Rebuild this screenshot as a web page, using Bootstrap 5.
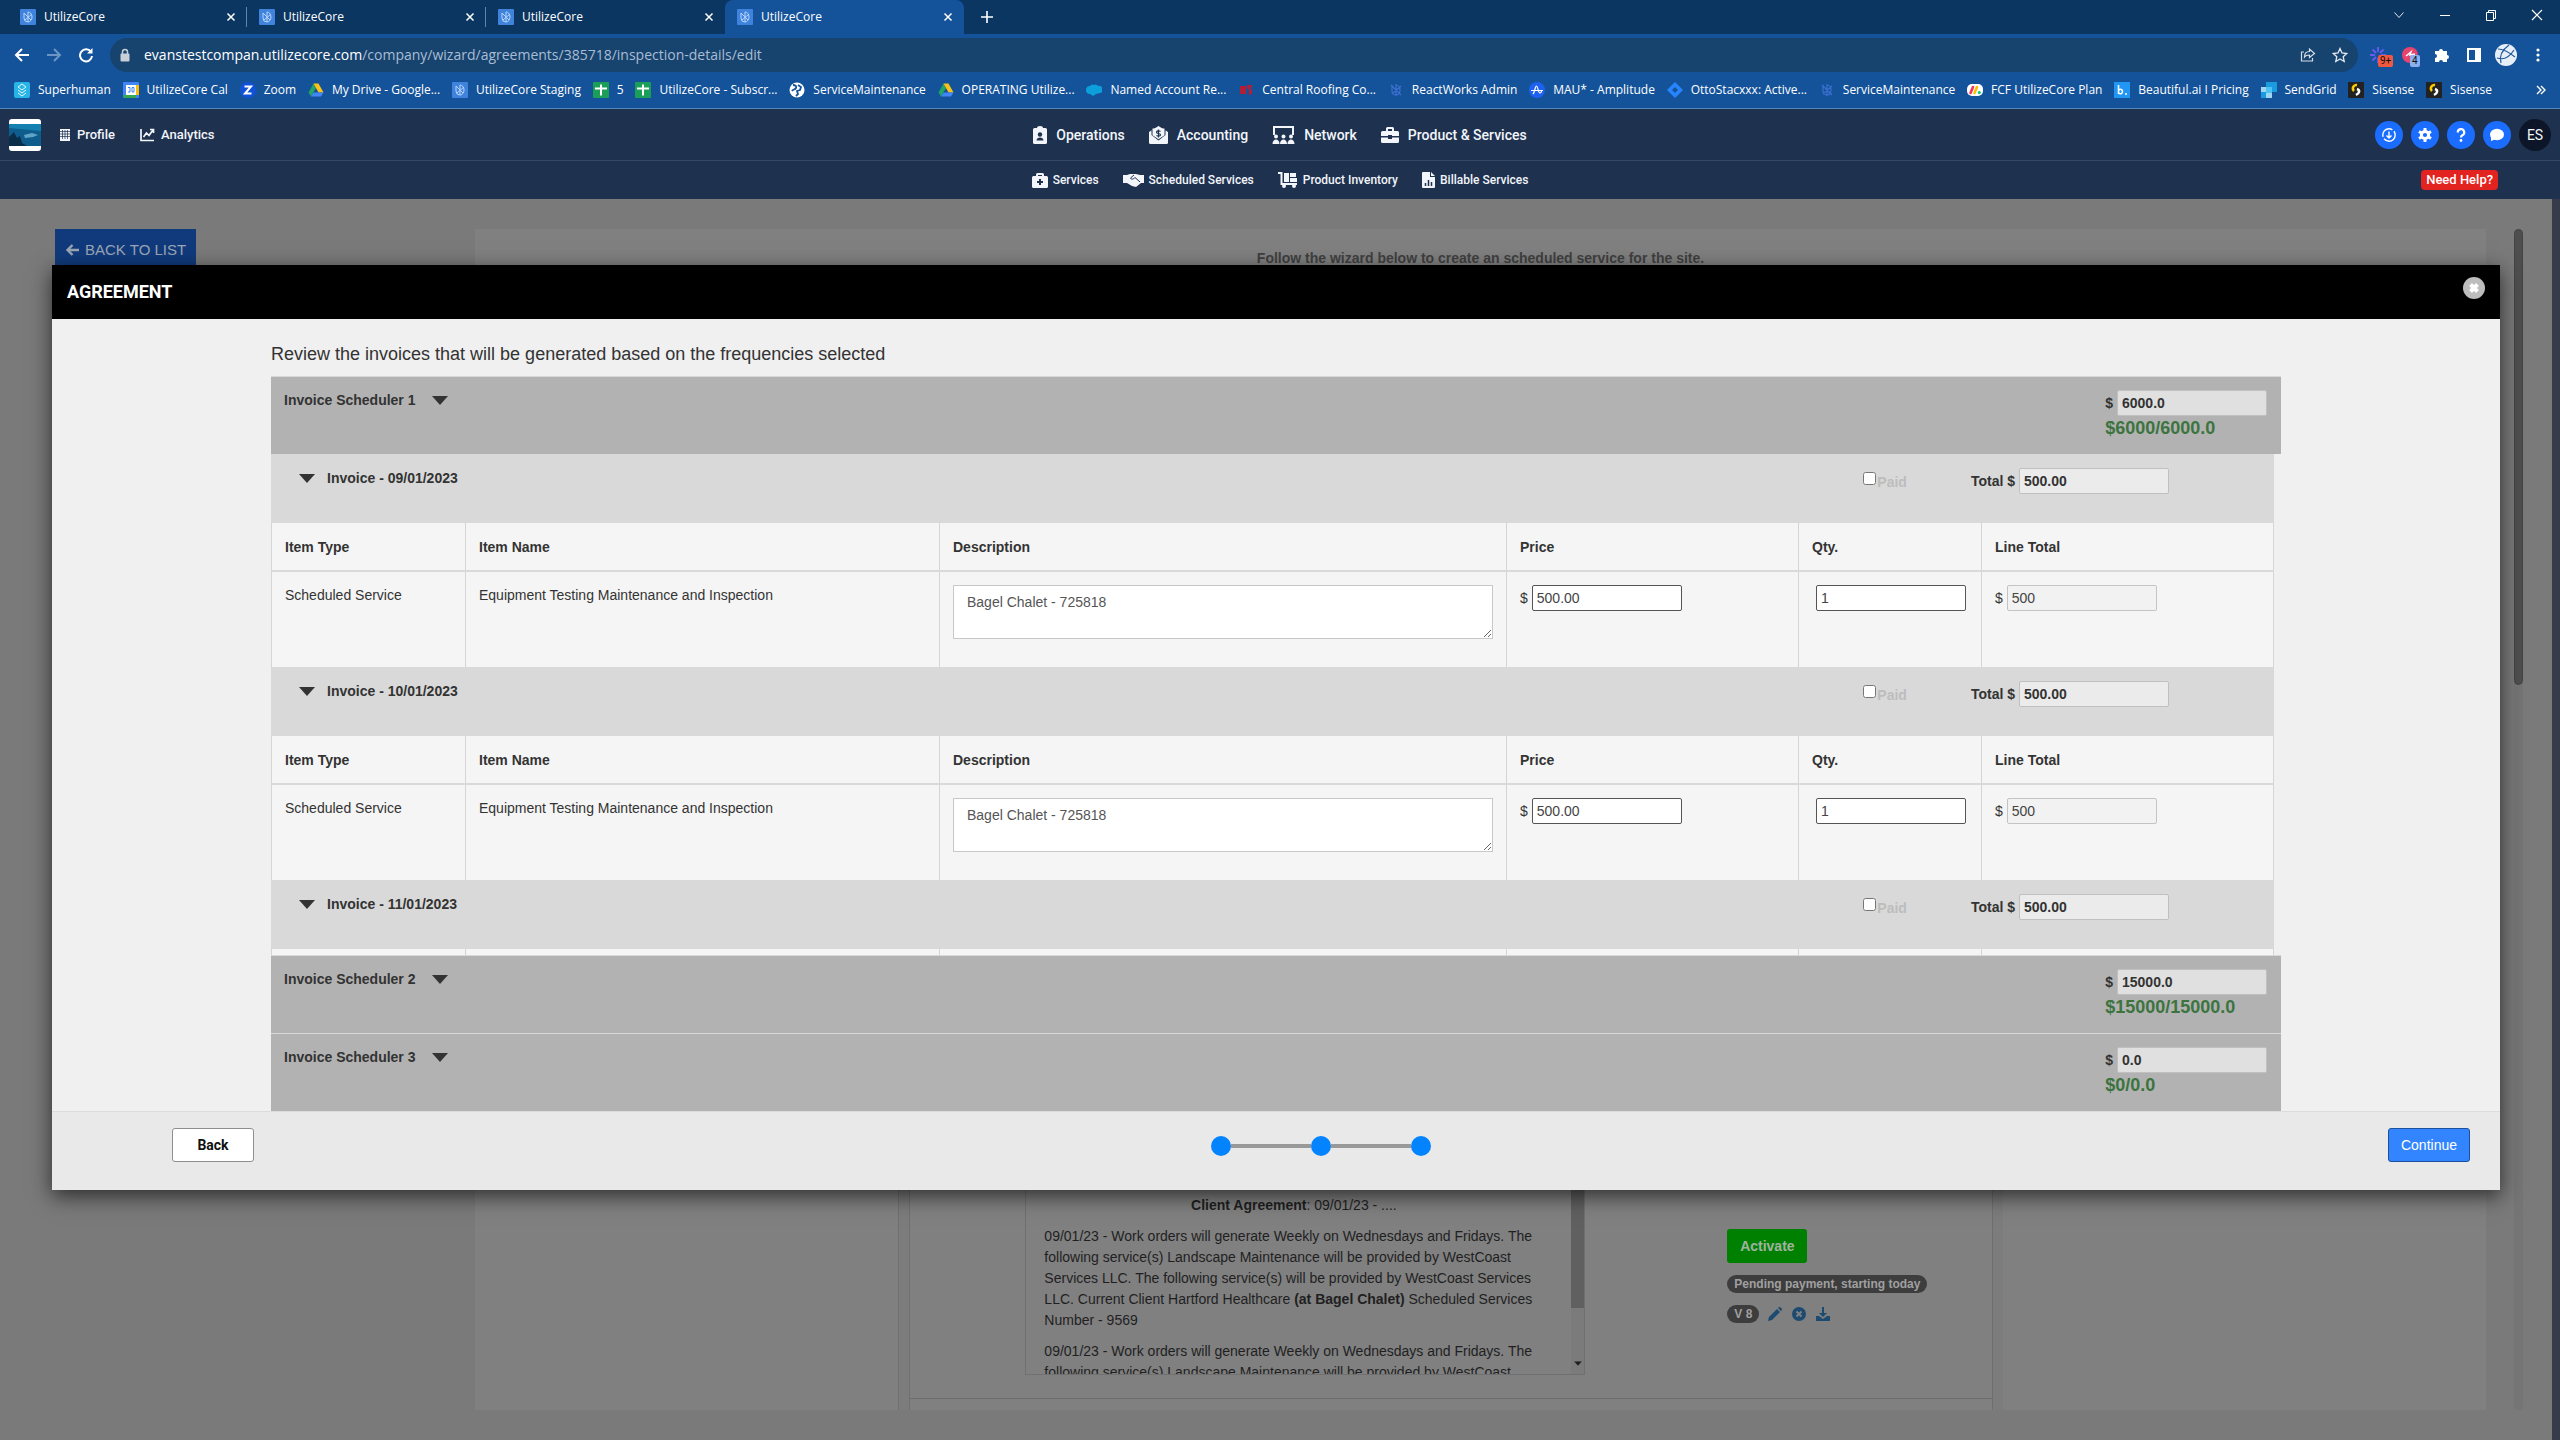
<!DOCTYPE html>
<html lang="en">
<head>
<meta charset="utf-8">
<meta name="viewport" content="width=device-width, initial-scale=1">
<title>UtilizeCore</title>
<link href="https://cdn.jsdelivr.net/npm/bootstrap@5.3.0/dist/css/bootstrap.min.css" rel="stylesheet">
<style>
  body { font: 14px/20px "Liberation Sans", Arial, sans-serif; color: #333; background: #363c49; min-height: 100vh; }
  a { text-decoration: none; }
  svg { flex: none; display: block; }
  .i16 { width: 16px; height: 16px; }
  .i20 { width: 20px; height: 20px; }
  /* browser frame */
  .chrome { background: #14539a; color: #fff; font: 12px/18px "Open Sans", "Noto Sans", sans-serif; border-bottom: 1px solid #4f86b8; }
  .chrome a { color: #fff; }
  .tabstrip { background: #0b3661; height: 34px; padding-left: 8px; padding-right: 15px; }
  .btab { width: 239px; padding: 0 10px 0 12px; height: 34px; }
  .btab + .btab:not(.active) { box-shadow: inset 0 0 0 0 transparent; }
  .btab.split { background: linear-gradient(#5d86ae, #5d86ae) right center / 1px 20px no-repeat; }
  .btab.active { background: #14539a; border-radius: 8px 8px 0 0; }
  .plainbtn { background: none; border: 0; padding: 0; color: inherit; display: block; }
  .winbtns { gap: 30px; }
  .toolbar { height: 38px; padding: 0 14px; }
  .navbtns { gap: 16px; width: 96px; }
  .omni { background: #17436f; border-radius: 17px; height: 34px; padding: 0 10px 0 8px; font-size: 14px; }
  .omni input { background: none; border: 0; color: #a9bdd3; outline: 0; padding: 0; }
  .omni .host { color: #fff; }
  .exts { gap: 16px; padding-left: 12px; }
  .ext { width: 16px; height: 16px; position: relative; }
  .ext-n { position: absolute; left: 8px; top: 8px; font: 10px/12px Roboto, sans-serif; color: #111; padding: 0 2px; border-radius: 2px; }
  .bookmarks { height: 36px; padding: 0 14px; font-size: 12px; }
  .bookmarks a { gap: 8px; white-space: nowrap; }
  /* app navigation */
  .appnav { background: #1e314f; font-family: Roboto, sans-serif; font-weight: 500; color: #f2f5fa; }
  .appnav a { color: #f2f5fa; }
  .nav-top { height: 52px; padding: 0 9px; border-bottom: 1px solid #35486a; }
  .nav-sub { height: 38px; font-size: 12px; }
  .side { flex: 1 1 0; }
  .mainmenu { gap: 24px; font-size: 14px; }
  .mainmenu a { gap: 9px; }
  .submenu { gap: 24px; }
  .submenu a { gap: 5px; }
  .logo { width: 32px; height: 32px; }
  .small-links { font-size: 13px; padding-left: 18px; gap: 25px; }
  .small-links a { gap: 6px; }
  .round { width: 28px; height: 28px; border: 0; border-radius: 50%; background: #1a6dff; color: #fff; padding: 0; }
  .avatar { width: 32px; height: 32px; border-radius: 50%; background: #0c1628; font-weight: 400; }
  .help-btn { background: #e3231f; color: #fff; border: 0; border-radius: 4px; font-size: 13px; line-height: 20px; padding: 0 5px; margin-right: 62px; font-weight: 500; }
  /* dimmed page */
  .page { background: #7a7a7a; margin-right: 8px; padding: 30px 29px 30px 55px; min-height: 1241px; }
  .leftcol { width: 420px; }
  .backlist { background: #113a7c; color: #9aa5b5; border: 0; border-radius: 0; height: 42px; font-size: 15px; padding: 0 10px; gap: 6px; }
  .panel { background: #808080; color: #1f1f1f; }
  .wizard-note { color: #404040; font-weight: 700; padding-top: 19px; }
  .cols { gap: 10px; }
  .pcol { border: 0 solid #6f6f6f; border-right-width: 1px; box-shadow: 10px 0 0 #7c7c7c; }
  .pmid { border-left-width: 1px; }
  .agree { padding: 0 0 23px 115px; border-bottom: 1px solid #6c6c6c; margin-bottom: 11px; }
  .agree-box { width: 560px; height: 194px; border: 1px solid #707070; line-height: 21px; overflow: hidden; }
  .agree-text { padding: 13px 28px 0 18px; }
  .agree-text p { margin: 0 0 10px; }
  .abar { width: 18px; background: #7b7b7b; }
  .abar .thumb { width: 13px; height: 126px; background: #606060; }
  .acts { padding: 48px 0 0 142px; }
  .activate { background: #008000; color: #a0b3a0; border: 0; border-radius: 3px; height: 34px; width: 80px; font-weight: 700; }
  .pill { background: #3d3d3d; color: #a0a0a0; font: 700 12px/18px "Liberation Sans", Arial, sans-serif; border-radius: 9px; padding: 0 7px; }
  .iconlinks { gap: 8px; color: #1d4a70; }
  .iconlinks a { color: #1d4a70; }
  .track { width: 9px; margin-left: 28px; background: #757575; border-radius: 5px; }
  .track .thumb { height: 456px; background: #4e4e4e; border: 1px solid #444; border-radius: 5px; }
  /* dialog */
  .dlg { position: absolute; left: 52px; right: 60px; top: 265px; background: #f0f0f0; box-shadow: 0 6px 20px rgba(0,0,0,.65); }
  .dlg-head { background: #000; color: #fff; height: 54px; padding: 0 15px; font: 700 18px/24px Roboto, sans-serif; }
  .dlg-head h1 { font: inherit; margin: 0; }
  .dlg-body { padding: 23px 219px 0; }
  .intro { font-size: 18px; line-height: 24px; margin: 0 0 10px; }
  .sched { background: #b2b2b2; border-top: 1px solid #d8d8d8; height: 78px; padding: 13px 14px 0 13px; font-weight: 700; }
  .sched .plainbtn, .inv .plainbtn { font-weight: 700; }
  .caret { width: 16px; height: 9px; }
  .sum { color: #3c7440; font-size: 18px; line-height: 24px; }
  .cell-in { width: 150px; height: 26px; border: 1px solid #555; border-radius: 2px; background: #fff; padding: 0 4px; color: #444; font-size: 14px; line-height: 20px; }
  .cell-in.off { background: #f2f2f2; border-color: #c4c4c4; }
  .cell-in.bold { background: #ebebeb; border-color: #c0c0c0; font-weight: 700; color: #333; }
  .sched .cell-in.bold { background: #e0e0e0; }
  .invs { margin-right: 7px; }
  .inv { background: #d9d9d9; height: 69px; padding: 14px 105px 0 28px; font-weight: 700; }
  .paid { color: #bdbdbd; margin-right: 64px; padding-top: 4px; }
  .paid input { width: 13px; height: 13px; margin: 0 1px 0 0; }
  .items { table-layout: fixed; width: 100%; background: #f5f5f5; border-collapse: collapse; }
  .items th, .items td { border: 1px solid #d5d5d5; border-top: 0; padding: 0 13px; }
  .items th { height: 48px; border-bottom: 2px solid #d9d9d9; }
  .items td { height: 96px; border-bottom: 0; padding-top: 13px; vertical-align: top; }
  .items .stub { height: 6px; padding: 0; }
  .c1 { width: 194px; } .c2 { width: 474px; } .c3 { width: 567px; } .c4 { width: 292px; } .c5 { width: 183px; }
  .desc { display: block; width: 100%; height: 54px; border: 1px solid #c8c8c8; border-radius: 0; background: #fff; color: #555; padding: 6px 13px; line-height: 20px; resize: vertical; }
  .dlg-foot { background: #e9e9e9; border-top: 1px solid #dcdcdc; height: 79px; padding: 16px 30px 0 120px; }
  .btn-back { width: 82px; height: 34px; border: 1px solid #8f8f8f; border-radius: 3px; background: #fff; color: #111; font: 700 14px/20px Roboto, sans-serif; }
  .btn-go { width: 82px; height: 34px; border: 1px solid #1c4f9c; border-radius: 3px; background: #3385ff; color: #fff; }
  .steps .dot { width: 20px; height: 20px; border-radius: 50%; background: #0483ff; }
  .steps .bar { width: 80px; height: 4px; background: #999; }
</style>
<script src="https://cdn.jsdelivr.net/npm/bootstrap@5.3.0/dist/js/bootstrap.bundle.min.js"></script>
</head>
<body>
<svg width="0" height="0" class="position-absolute" aria-hidden="true">
  <symbol id="uc" viewBox="0 0 16 16"><rect width="16" height="16" rx="1" fill="#3f83dd"/><path d="M4 4v5a4 4 0 0 0 4 4M8 3v10M8 3a4 5 0 0 1 0 10M4 4l7 7M12 5l-7 6" fill="none" stroke="#b9d6ff" stroke-width="1"/></symbol>
  <symbol id="ucd" viewBox="0 0 16 16"><path d="M4 3v6a4 4 0 0 0 4 4M8 2v12M8 3a4 5 0 0 1 0 10M3 3l10 10M13 4l-9 8" fill="none" stroke="#3c6fd0" stroke-width="1.2"/></symbol>
  <symbol id="x" viewBox="0 0 12 12"><path d="M2.5 2.5l7 7M9.500 2.500l-7 7" stroke="currentColor" stroke-width="1.500"/></symbol>
  <symbol id="drive" viewBox="0 0 16 16"><path d="M5.500 1.500L.5 10.500 3 14.500 8 6z" fill="#22a565"/><path d="M5.500 1.500h5l5 9h-5z" fill="#fbc116"/><path d="M5.500 10.500h10l-2.500 4H3z" fill="#4285f4"/></symbol>
  <symbol id="sheet" viewBox="0 0 16 16"><rect width="16" height="16" rx="1" fill="#1b9e58"/><path d="M8 2.500v11M2 6.500h12" stroke="#fff" stroke-width="2"/></symbol>
  <symbol id="sis" viewBox="0 0 16 16"><rect width="16" height="16" fill="#222"/><path d="M9 3a3.500 3.500 0 0 0-3 6" fill="none" stroke="#ffcb05" stroke-width="2.500"/><path d="M9 7c3 1 3 4-1 6" fill="none" stroke="#fff" stroke-width="2.500"/></symbol>
  <symbol id="tri" viewBox="0 0 16 9"><path d="M0 0h16L8 9z" fill="currentColor"/></symbol>
</svg>

<header class="chrome">
  <div class="tabstrip d-flex align-items-center">
    <div class="btab split d-flex align-items-center gap-2"><svg class="i16"><use href="#uc"/></svg><span class="flex-grow-1">UtilizeCore</span><button class="plainbtn" aria-label="Close tab"><svg width="12" height="12"><use href="#x"/></svg></button></div>
    <div class="btab split d-flex align-items-center gap-2"><svg class="i16"><use href="#uc"/></svg><span class="flex-grow-1">UtilizeCore</span><button class="plainbtn" aria-label="Close tab"><svg width="12" height="12"><use href="#x"/></svg></button></div>
    <div class="btab d-flex align-items-center gap-2"><svg class="i16"><use href="#uc"/></svg><span class="flex-grow-1">UtilizeCore</span><button class="plainbtn" aria-label="Close tab"><svg width="12" height="12"><use href="#x"/></svg></button></div>
    <div class="btab active d-flex align-items-center gap-2"><svg class="i16"><use href="#uc"/></svg><span class="flex-grow-1">UtilizeCore</span><button class="plainbtn" aria-label="Close tab"><svg width="12" height="12"><use href="#x"/></svg></button></div>
    <button class="plainbtn ms-3" aria-label="New tab"><svg width="14" height="14" viewBox="0 0 14 14"><path d="M7 1v12M1 7h12" stroke="#fff" stroke-width="1.600"/></svg></button>
    <div class="winbtns d-flex ms-auto pb-1">
      <button class="plainbtn" aria-label="Search tabs"><svg class="i16" viewBox="0 0 16 16"><path d="M3.500 5.500L8 10.500l4.500-5" fill="none" stroke="#dfe8f2"/></svg></button>
      <button class="plainbtn" aria-label="Minimize"><svg class="i16" viewBox="0 0 16 16"><path d="M3 8.500h10" stroke="#fff"/></svg></button>
      <button class="plainbtn" aria-label="Restore"><svg class="i16" viewBox="0 0 16 16"><path d="M3.500 5.500h7v8h-7zM5.500 5.500v-2h7v8h-2" fill="none" stroke="#fff"/></svg></button>
      <button class="plainbtn" aria-label="Close"><svg class="i16" viewBox="0 0 16 16"><path d="M3 3l10 10M13 3L3 13" stroke="#fff" stroke-width="1.200"/></svg></button>
    </div>
  </div>
  <div class="toolbar d-flex align-items-center pt-1">
    <div class="navbtns d-flex">
      <button class="plainbtn" aria-label="Back"><svg class="i16" viewBox="0 0 16 16"><path d="M15 8H2M8 2L2 8l6 6" fill="none" stroke="#fff" stroke-width="2"/></svg></button>
      <button class="plainbtn" aria-label="Forward"><svg class="i16" viewBox="0 0 16 16"><path d="M1 8h13M8 2l6 6-6 6" fill="none" stroke="#6c95c4" stroke-width="2"/></svg></button>
      <button class="plainbtn" aria-label="Reload"><svg class="i16" viewBox="0 0 16 16"><path d="M13 5a6 6 0 1 0 1 4" fill="none" stroke="#fff" stroke-width="2"/><path d="M14.500 1v5.500H9z" fill="#fff"/></svg></button>
    </div>
    <div class="omni d-flex align-items-center flex-grow-1">
      <svg width="14" height="14" viewBox="0 0 14 14"><rect x="2.500" y="5.500" width="9" height="8" rx="1" fill="#c9cfd6"/><path d="M4.500 6V4a2.500 2.500 0 0 1 5 0v2" fill="none" stroke="#c9cfd6" stroke-width="1.500"/></svg>
      <span class="host ms-2 ps-1">evanstestcompan.utilizecore.com</span><input class="flex-grow-1" aria-label="Address" value="/company/wizard/agreements/385718/inspection-details/edit">
      <button class="plainbtn me-3" aria-label="Share"><svg class="i16" viewBox="0 0 16 16"><path d="M4 5H1.500v9h11v-3M4.500 10c0-4 2-5.500 5-5.500V2l5 4.500-5 4V8c-2.500 0-4 .5-5 2z" fill="none" stroke="#d5dde6" stroke-width="1.200"/></svg></button>
      <button class="plainbtn" aria-label="Bookmark"><svg class="i16" viewBox="0 0 16 16"><path d="M8 1.500l2 4.500 4.700.5-3.500 3.200 1 4.800L8 12l-4.200 2.500 1-4.800L1.300 6.500 6 6z" fill="none" stroke="#e4eaf2" stroke-width="1.300"/></svg></button>
    </div>
    <div class="exts d-flex align-items-center">
      <div class="ext"><svg class="i16" viewBox="0 0 16 16"><g stroke="#6a5bf0" stroke-width="1.800"><path d="M8 0v5M8 11v5M0 8h5M11 8h5M2.500 2.500L6 6M10 10l3.500 3.500M13.500 2.500L10 6M6 10l-3.500 3.500"/></g></svg><span class="ext-n" style="background:#f0583f">9+</span></div>
      <div class="ext"><svg class="i16" viewBox="0 0 16 16"><circle cx="8" cy="8" r="8" fill="#e8436d"/><path d="M4 9l5-4-1 3 5-1" fill="none" stroke="#fff" stroke-width="1.500"/></svg><span class="ext-n" style="background:#8ab0f0">4</span></div>
      <svg class="i16" viewBox="0 0 16 16"><path d="M1 4h4a2 2 0 1 1 4 0h4v4a2 2 0 1 1 0 4v3H9a2 2 0 1 0-4 0H1v-4a2 2 0 1 0 0-4z" fill="#fff"/></svg>
      <svg class="i16" viewBox="0 0 16 16"><path fill-rule="evenodd" d="M1 1h14v14H1zM3 3v10h6V3z" fill="#fff"/></svg>
      <svg width="22" height="22" viewBox="0 0 22 22" style="margin:-3px"><circle cx="11" cy="11" r="11" fill="#e6eef8"/><path d="M3 5c6 0 12 4 17 8M6 19C4 12 7 6 14 1M2 14c6 2 12 0 17-8" fill="none" stroke="#23589b" stroke-width="1.200"/></svg>
      <svg class="i16" viewBox="0 0 16 16"><g fill="#fff"><circle cx="8" cy="3" r="1.600"/><circle cx="8" cy="8" r="1.600"/><circle cx="8" cy="13" r="1.600"/></g></svg>
    </div>
  </div>
  <nav class="bookmarks d-flex align-items-center justify-content-between">
    <a href="#" class="d-flex align-items-center"><svg class="i16" viewBox="0 0 16 16"><rect width="16" height="16" rx="2" fill="#27b5e8"/><path d="M8 2l4 3-4 3-4-3zM4 8l4 3 4-3M4 11l4 3 4-3" fill="none" stroke="#e5f8ff"/></svg>Superhuman</a>
    <a href="#" class="d-flex align-items-center"><svg class="i16" viewBox="0 0 16 16"><rect width="16" height="16" rx="1" fill="#4285f4"/><path d="M13 3h3v10h-3z" fill="#fbbc04"/><path d="M0 13h13v3H1z" fill="#34a853"/><path d="M3 3h10v10H3z" fill="#fff"/><path d="M5 5.500h2V10H5M9 5.500h2V10H9z" fill="none" stroke="#4285f4"/></svg>UtilizeCore Cal</a>
    <a href="#" class="d-flex align-items-center"><svg class="i16" viewBox="0 0 16 16"><circle cx="8" cy="8" r="8" fill="#1151d8"/><path d="M4.500 4.500h6.500l-6 7h6.500" fill="none" stroke="#fff" stroke-width="2"/></svg>Zoom</a>
    <a href="#" class="d-flex align-items-center"><svg class="i16"><use href="#drive"/></svg>My Drive - Google...</a>
    <a href="#" class="d-flex align-items-center"><svg class="i16"><use href="#uc"/></svg>UtilizeCore Staging</a>
    <a href="#" class="d-flex align-items-center"><svg class="i16"><use href="#sheet"/></svg>5</a>
    <a href="#" class="d-flex align-items-center"><svg class="i16"><use href="#sheet"/></svg>UtilizeCore - Subscr...</a>
    <a href="#" class="d-flex align-items-center"><svg class="i16" viewBox="0 0 16 16"><circle cx="8" cy="8" r="7.500" fill="#fff"/><path d="M4 3c2 0 4 1 3 3S4 7 3 9M9 3l3 2-1 3-3 1 1 3-2 2" fill="none" stroke="#14539a" stroke-width="1.800"/></svg>ServiceMaintenance</a>
    <a href="#" class="d-flex align-items-center"><svg class="i16"><use href="#drive"/></svg>OPERATING Utilize...</a>
    <a href="#" class="d-flex align-items-center"><svg class="i16" viewBox="0 0 16 16"><path d="M4 4a3 3 0 0 1 4-1 3 3 0 0 1 4 1 3.500 3.500 0 0 1 2 7l-4 1-3 2-3-2a3.500 3.500 0 0 1 0-8z" fill="#0c9fdc"/></svg>Named Account Re...</a>
    <a href="#" class="d-flex align-items-center"><svg class="i16" viewBox="0 0 16 16"><path d="M2 4h6v8H2zM9 3h5v2l-2 1 2 2v4l-3 1V7H9z" fill="#b01f36"/></svg>Central Roofing Co...</a>
    <a href="#" class="d-flex align-items-center"><svg class="i16"><use href="#ucd"/></svg>ReactWorks Admin</a>
    <a href="#" class="d-flex align-items-center"><svg class="i16" viewBox="0 0 16 16"><circle cx="8" cy="8" r="8" fill="#1e61f0"/><path d="M2 8.500h12M4 12c2-2 2-8 3.500-8S9 11 11 11s1-2 2-2" fill="none" stroke="#fff" stroke-width="1.200"/></svg>MAU* - Amplitude</a>
    <a href="#" class="d-flex align-items-center"><svg class="i16" viewBox="0 0 16 16"><path d="M8 0l8 8-8 8-8-8z" fill="#2684ff"/><path d="M8 5l3 3-3 3-3-3z" fill="#14539a"/></svg>OttoStacxxx: Active...</a>
    <a href="#" class="d-flex align-items-center"><svg class="i16"><use href="#ucd"/></svg>ServiceMaintenance</a>
    <a href="#" class="d-flex align-items-center"><svg class="i16" viewBox="0 0 16 16"><rect width="16" height="12" y="2" rx="5" fill="#fff"/><path d="M3.500 11L6 5" stroke="#f6335c" stroke-width="2.600" stroke-linecap="round"/><path d="M7.500 11L10 5" stroke="#ffbd00" stroke-width="2.600" stroke-linecap="round"/><circle cx="12.300" cy="10.500" r="1.500" fill="#00ca72"/></svg>FCF UtilizeCore Plan</a>
    <a href="#" class="d-flex align-items-center"><svg class="i16" viewBox="0 0 16 16"><rect width="16" height="16" fill="#2196f3"/><path d="M4.500 3v9M4.500 9a2 2.300 0 1 1 0 1" fill="none" stroke="#fff" stroke-width="1.600"/><circle cx="12" cy="12" r="1" fill="#fff"/></svg>Beautiful.ai I Pricing</a>
    <a href="#" class="d-flex align-items-center"><svg class="i16" viewBox="0 0 16 16"><path d="M5 0h11v10h-5v6H0V5h5z" fill="#1a9be0"/><path d="M5 5h6v6H5z" fill="#4cc3f0"/><path d="M0 5h5v5H0zM5 11h6v5H5z" fill="#9dd6f2"/></svg>SendGrid</a>
    <a href="#" class="d-flex align-items-center"><svg class="i16"><use href="#sis"/></svg>Sisense</a>
    <a href="#" class="d-flex align-items-center"><svg class="i16"><use href="#sis"/></svg>Sisense</a>
    <button class="plainbtn ps-4" aria-label="More bookmarks"><svg width="10" height="10" viewBox="0 0 10 10" class="ms-2"><path d="M1 1l4 4-4 4M5 1l4 4-4 4" fill="none" stroke="#fff" stroke-width="1.400"/></svg></button>
  </nav>
</header>

<nav class="appnav">
  <div class="nav-top d-flex align-items-center">
    <div class="side d-flex align-items-center">
      <svg class="logo" viewBox="0 0 32 32"><rect width="32" height="32" rx="3" fill="#fff"/><rect y="5" width="32" height="22" fill="#0e5d8c"/><path d="M0 5h32v7L0 9z" fill="#1480b0"/><path d="M0 18l5-5 3 6 3-2 2 7 5 3H0z" fill="#0a2d4a"/><path d="M15 16l8-2 6 2-5 2-8 1z" fill="#5fa6c6"/></svg>
      <div class="small-links d-flex">
        <a href="#" class="d-flex align-items-center"><svg width="12" height="14" viewBox="0 0 12 14"><path d="M1 1h10v12H1z" fill="#f2f5fa"/><path d="M3.500 2v9M6 2v9M8.500 2v9M1 3.500h10M1 6h10M1 8.500h10" stroke="#1e314f" stroke-width=".7"/></svg>Profile</a>
        <a href="#" class="d-flex align-items-center"><svg width="15" height="14" viewBox="0 0 15 14"><path d="M1 1v11.500h13M3.500 9l3-4 2.500 2.500L13 2M13.500 5V1.500H10" fill="none" stroke="#f2f5fa" stroke-width="1.700"/></svg>Analytics</a>
      </div>
    </div>
    <div class="mainmenu d-flex">
      <a href="#" class="d-flex align-items-center"><svg width="14" height="18" viewBox="0 0 14 18"><path d="M1.500 2H4a3 2 0 0 1 6 0h2.500A1.500 1.500 0 0 1 14 3.500v13A1.500 1.500 0 0 1 12.500 18h-11A1.500 1.500 0 0 1 0 16.500v-13A1.500 1.500 0 0 1 1.500 2z" fill="#f2f5fa"/><circle cx="7" cy="8.500" r="2.200" fill="#1e314f"/><path d="M3.500 14.500c0-4 7-4 7 0z" fill="#1e314f"/></svg>Operations</a>
      <a href="#" class="d-flex align-items-center"><svg width="19" height="18" viewBox="0 0 19 18"><path d="M0 6l9.500-6L19 6v10.500A1.500 1.500 0 0 1 17.500 18h-16A1.500 1.500 0 0 1 0 16.500z" fill="#f2f5fa"/><path d="M2.500 3h14v6l-7 5.500L2.500 9z" fill="#1e314f"/><path d="M3.500 2.500h12v6.700l-6 4-6-4z" fill="#f2f5fa"/><path d="M11.500 5.500c-2-1.500-4-.5-4 .7 0 1.800 4 .8 4 2.600 0 1.200-2 1.800-4 .6M9.500 3.500v8" fill="none" stroke="#1e314f" stroke-width="1.200"/></svg>Accounting</a>
      <a href="#" class="d-flex align-items-center"><svg width="23" height="18" viewBox="0 0 23 18"><path d="M2 9V1h19v8" fill="none" stroke="#f2f5fa" stroke-width="2"/><g fill="#f2f5fa"><circle cx="4" cy="10.500" r="2"/><circle cx="11.500" cy="10.500" r="2"/><circle cx="19" cy="10.500" r="2"/><path d="M.5 18c0-6 7-6 7 0zM8 18c0-6 7-6 7 0zM15.500 18c0-6 7-6 7 0z"/></g></svg>Network</a>
      <a href="#" class="d-flex align-items-center"><svg width="18" height="16" viewBox="0 0 18 16"><path d="M5 4V1.500A1.500 1.500 0 0 1 6.500 0h5A1.500 1.500 0 0 1 13 1.500V4h3.500A1.500 1.500 0 0 1 18 5.500V9h-7V8H7v1H0V5.500A1.500 1.500 0 0 1 1.500 4zM7 4h4V2H7zM0 10.500h7V12h4v-1.500h7v4a1.500 1.500 0 0 1-1.500 1.500h-15A1.500 1.500 0 0 1 0 14.500z" fill="#f2f5fa" fill-rule="evenodd"/></svg>Product &amp; Services</a>
    </div>
    <div class="side d-flex align-items-center justify-content-end gap-2">
      <button class="round d-flex align-items-center justify-content-center" aria-label="Downloads"><svg class="i16" viewBox="0 0 16 16"><circle cx="8" cy="8" r="6.200" fill="none" stroke="#fff" stroke-width="1.400" stroke-dasharray="15 2"/><path d="M8 4.500v6M5.500 8.500L8 11l2.500-2.500" fill="none" stroke="#fff" stroke-width="1.400"/></svg></button>
      <button class="round d-flex align-items-center justify-content-center" aria-label="Settings"><svg class="i16" viewBox="0 0 16 16"><circle cx="8" cy="8" r="3.600" fill="none" stroke="#fff" stroke-width="3"/><path d="M8 1v3M8 12v3M2 4.500L4.500 6M11.500 10l2.500 1.500M2 11.500L4.500 10M11.500 6L14 4.500" stroke="#fff" stroke-width="3"/></svg></button>
      <button class="round d-flex align-items-center justify-content-center" aria-label="Help"><svg class="i16" viewBox="0 0 16 16"><path d="M4.800 5.500a3.200 3.200 0 1 1 4.600 2.700C8.300 8.800 8 9.200 8 10.500" fill="none" stroke="#fff" stroke-width="2.200"/><circle cx="8" cy="13.500" r="1.400" fill="#fff"/></svg></button>
      <button class="round d-flex align-items-center justify-content-center" aria-label="Chat"><svg class="i16" viewBox="0 0 16 16"><ellipse cx="8" cy="7.500" rx="7" ry="5.800" fill="#fff"/><path d="M2 9v5l5-2z" fill="#fff"/></svg></button>
      <span class="avatar d-flex align-items-center justify-content-center">ES</span>
    </div>
  </div>
  <div class="nav-sub d-flex align-items-center">
    <div class="side"></div>
    <div class="submenu d-flex">
      <a href="#" class="d-flex align-items-center"><svg width="16" height="15" viewBox="0 0 16 15"><path fill-rule="evenodd" d="M4 3V1.500A1.500 1.500 0 0 1 5.500 0h5A1.500 1.500 0 0 1 12 1.500V3h2.500A1.500 1.500 0 0 1 16 4.500v9a1.500 1.500 0 0 1-1.500 1.500h-13A1.500 1.500 0 0 1 0 13.500v-9A1.500 1.500 0 0 1 1.500 3zM6 3h4V2H6zm1 3v2H5v2h2v2h2v-2h2V8H9V6z" fill="#f2f5fa"/></svg>Services</a>
      <a href="#" class="d-flex align-items-center"><svg width="21" height="14" viewBox="0 0 21 14"><path d="M0 2h4l3-1h6l4 1h4v8h-3l-5 4-4-1-5-3H0z" fill="#f2f5fa"/><path d="M11 2L7.500 5c1 2 3 1 4.500-.5L17 9" fill="none" stroke="#1e314f"/></svg>Scheduled Services</a>
      <a href="#" class="d-flex align-items-center"><svg width="20" height="16" viewBox="0 0 20 16"><path d="M0 1h3.500v11H19" fill="none" stroke="#f2f5fa" stroke-width="2"/><path d="M6 1h5v9H6zM12 1h6v4h-6zM12 6h7v4h-7z" fill="#f2f5fa"/><circle cx="6" cy="14" r="2" fill="#f2f5fa"/><circle cx="16" cy="14" r="2" fill="#f2f5fa"/></svg>Product Inventory</a>
      <a href="#" class="d-flex align-items-center"><svg width="13" height="16" viewBox="0 0 13 16"><path d="M1 0h7v5h5v10a1 1 0 0 1-1 1H1a1 1 0 0 1-1-1V1a1 1 0 0 1 1-1zM9 0l4 4H9z" fill="#f2f5fa"/><path d="M3.500 14v-3M6.500 14V8M9.500 14v-4" stroke="#1e314f" stroke-width="1.500"/></svg>Billable Services</a>
    </div>
    <div class="side d-flex justify-content-end"><button class="help-btn">Need Help?</button></div>
  </div>
</nav>

<main class="page d-flex">
  <div class="leftcol"><button class="backlist d-flex align-items-center"><svg width="14" height="14" viewBox="0 0 14 14"><path d="M14 7H3M7.500 2l-5 5 5 5" fill="none" stroke="currentColor" stroke-width="2.400"/></svg>BACK TO LIST</button></div>
  <section class="panel d-flex flex-column flex-grow-1">
    <div class="wizard-note text-center">Follow the wizard below to create an scheduled service for the site.</div>
    <div class="cols d-flex flex-grow-1">
      <div class="pcol" style="flex:424 1 0"></div>
      <div class="pcol pmid d-flex flex-column justify-content-end" style="flex:1083 1 0">
        <div class="agree d-flex">
          <div class="agree-box d-flex">
            <div class="agree-text flex-grow-1">
              <p class="text-center"><b>Client Agreement</b>: 09/01/23 - ....</p>
              <p>09/01/23 - Work orders will generate Weekly on Wednesdays and Fridays. The following service(s) Landscape Maintenance will be provided by WestCoast Services LLC. The following service(s) will be provided by WestCoast Services LLC. Current Client Hartford Healthcare <b>(at Bagel Chalet)</b> Scheduled Services Number - 9569</p>
              <p>09/01/23 - Work orders will generate Weekly on Wednesdays and Fridays. The following service(s) Landscape Maintenance will be provided by WestCoast</p>
            </div>
            <div class="abar d-flex flex-column justify-content-between align-items-center pb-1"><div class="thumb"></div><svg width="8" height="5" viewBox="0 0 16 9" class="mb-1"><use href="#tri"/></svg></div>
          </div>
          <div class="acts">
            <button class="activate d-block">Activate</button>
            <div class="d-flex mt-2 pt-1"><span class="pill">Pending payment, starting today</span></div>
            <div class="iconlinks d-flex align-items-center mt-2 pt-1"><span class="pill">V 8</span>
              <a href="#" aria-label="Edit"><svg class="i16" viewBox="0 0 16 16"><path d="M2 11l8-8 3 3-8 8-4 1zM11 2l1-1h1l2 2v1l-1 1z" fill="currentColor"/></svg></a>
              <a href="#" aria-label="Cancel"><svg class="i16" viewBox="0 0 16 16"><circle cx="8" cy="8" r="7" fill="currentColor"/><path d="M5.500 5.500l5 5M10.500 5.500l-5 5" stroke="#808080" stroke-width="2"/></svg></a>
              <a href="#" aria-label="Download"><svg class="i16" viewBox="0 0 16 16"><path d="M7 1h2v6h3l-4 4-4-4h3zM1 10h3l4 3 4-3h3v5H1z" fill="currentColor"/></svg></a>
            </div>
          </div>
        </div>
      </div>
      <div style="flex:484 1 0"></div>
    </div>
  </section>
  <div class="track"><div class="thumb"></div></div>
</main>

<div class="dlg" role="dialog" aria-labelledby="dlgTitle">
  <div class="dlg-head d-flex align-items-center justify-content-between">
    <h1 id="dlgTitle">AGREEMENT</h1>
    <button class="plainbtn pb-2" aria-label="Close dialog"><svg width="22" height="22" viewBox="0 0 22 22"><circle cx="11" cy="11" r="11" fill="#bdbdbd"/><path d="M7.500 7.500l7 7M14.500 7.500l-7 7" stroke="#fff" stroke-width="4"/></svg></button>
  </div>
  <div class="dlg-body">
    <p class="intro">Review the invoices that will be generated based on the frequencies selected</p>
    <div class="sched d-flex justify-content-between align-items-start">
      <button class="plainbtn d-flex align-items-center gap-3">Invoice Scheduler 1<svg class="caret"><use href="#tri"/></svg></button>
      <div><label class="d-flex align-items-center gap-1">$<input class="cell-in bold" value="6000.0" readonly></label><div class="sum">$6000/6000.0</div></div>
    </div>
    <div class="invs">
      <div class="inv d-flex align-items-start">
        <button class="plainbtn d-flex align-items-center gap-2"><svg class="caret me-1"><use href="#tri"/></svg>Invoice - 09/01/2023</button>
        <label class="paid d-flex align-items-start ms-auto"><input type="checkbox">Paid</label>
        <label class="d-flex align-items-center gap-1">Total $<input class="cell-in bold" value="500.00" readonly></label>
      </div>
      <table class="items">
        <colgroup><col class="c1"><col class="c2"><col class="c3"><col class="c4"><col class="c5"><col></colgroup>
        <thead><tr><th>Item Type</th><th>Item Name</th><th>Description</th><th>Price</th><th>Qty.</th><th>Line Total</th></tr></thead>
        <tbody><tr><td>Scheduled Service</td><td>Equipment Testing Maintenance and Inspection</td><td><textarea class="desc" aria-label="Description">Bagel Chalet - 725818</textarea></td>
          <td><label class="d-flex align-items-center gap-1">$<input class="cell-in" value="500.00"></label></td><td><input class="cell-in ms-1" aria-label="Quantity" value="1"></td><td><label class="d-flex align-items-center gap-1">$<input class="cell-in off" value="500" readonly></label></td></tr></tbody>
      </table>
      <div class="inv d-flex align-items-start">
        <button class="plainbtn d-flex align-items-center gap-2"><svg class="caret me-1"><use href="#tri"/></svg>Invoice - 10/01/2023</button>
        <label class="paid d-flex align-items-start ms-auto"><input type="checkbox">Paid</label>
        <label class="d-flex align-items-center gap-1">Total $<input class="cell-in bold" value="500.00" readonly></label>
      </div>
      <table class="items">
        <colgroup><col class="c1"><col class="c2"><col class="c3"><col class="c4"><col class="c5"><col></colgroup>
        <thead><tr><th>Item Type</th><th>Item Name</th><th>Description</th><th>Price</th><th>Qty.</th><th>Line Total</th></tr></thead>
        <tbody><tr><td>Scheduled Service</td><td>Equipment Testing Maintenance and Inspection</td><td><textarea class="desc" aria-label="Description">Bagel Chalet - 725818</textarea></td>
          <td><label class="d-flex align-items-center gap-1">$<input class="cell-in" value="500.00"></label></td><td><input class="cell-in ms-1" aria-label="Quantity" value="1"></td><td><label class="d-flex align-items-center gap-1">$<input class="cell-in off" value="500" readonly></label></td></tr></tbody>
      </table>
      <div class="inv d-flex align-items-start">
        <button class="plainbtn d-flex align-items-center gap-2"><svg class="caret me-1"><use href="#tri"/></svg>Invoice - 11/01/2023</button>
        <label class="paid d-flex align-items-start ms-auto"><input type="checkbox">Paid</label>
        <label class="d-flex align-items-center gap-1">Total $<input class="cell-in bold" value="500.00" readonly></label>
      </div>
      <table class="items">
        <colgroup><col class="c1"><col class="c2"><col class="c3"><col class="c4"><col class="c5"><col></colgroup>
        <tbody><tr><td class="stub"></td><td class="stub"></td><td class="stub"></td><td class="stub"></td><td class="stub"></td><td class="stub"></td></tr></tbody>
      </table>
    </div>
    <div class="sched d-flex justify-content-between align-items-start">
      <button class="plainbtn d-flex align-items-center gap-3">Invoice Scheduler 2<svg class="caret"><use href="#tri"/></svg></button>
      <div><label class="d-flex align-items-center gap-1">$<input class="cell-in bold" value="15000.0" readonly></label><div class="sum">$15000/15000.0</div></div>
    </div>
    <div class="sched d-flex justify-content-between align-items-start">
      <button class="plainbtn d-flex align-items-center gap-3">Invoice Scheduler 3<svg class="caret"><use href="#tri"/></svg></button>
      <div><label class="d-flex align-items-center gap-1">$<input class="cell-in bold" value="0.0" readonly></label><div class="sum">$0/0.0</div></div>
    </div>
  </div>
  <div class="dlg-foot d-flex align-items-start">
    <div class="side"><button class="btn-back">Back</button></div>
    <div class="steps d-flex align-items-center pt-2"><span class="dot"></span><span class="bar"></span><span class="dot"></span><span class="bar"></span><span class="dot"></span></div>
    <div class="side text-end"><button class="btn-go">Continue</button></div>
  </div>
</div>
</body>
</html>
